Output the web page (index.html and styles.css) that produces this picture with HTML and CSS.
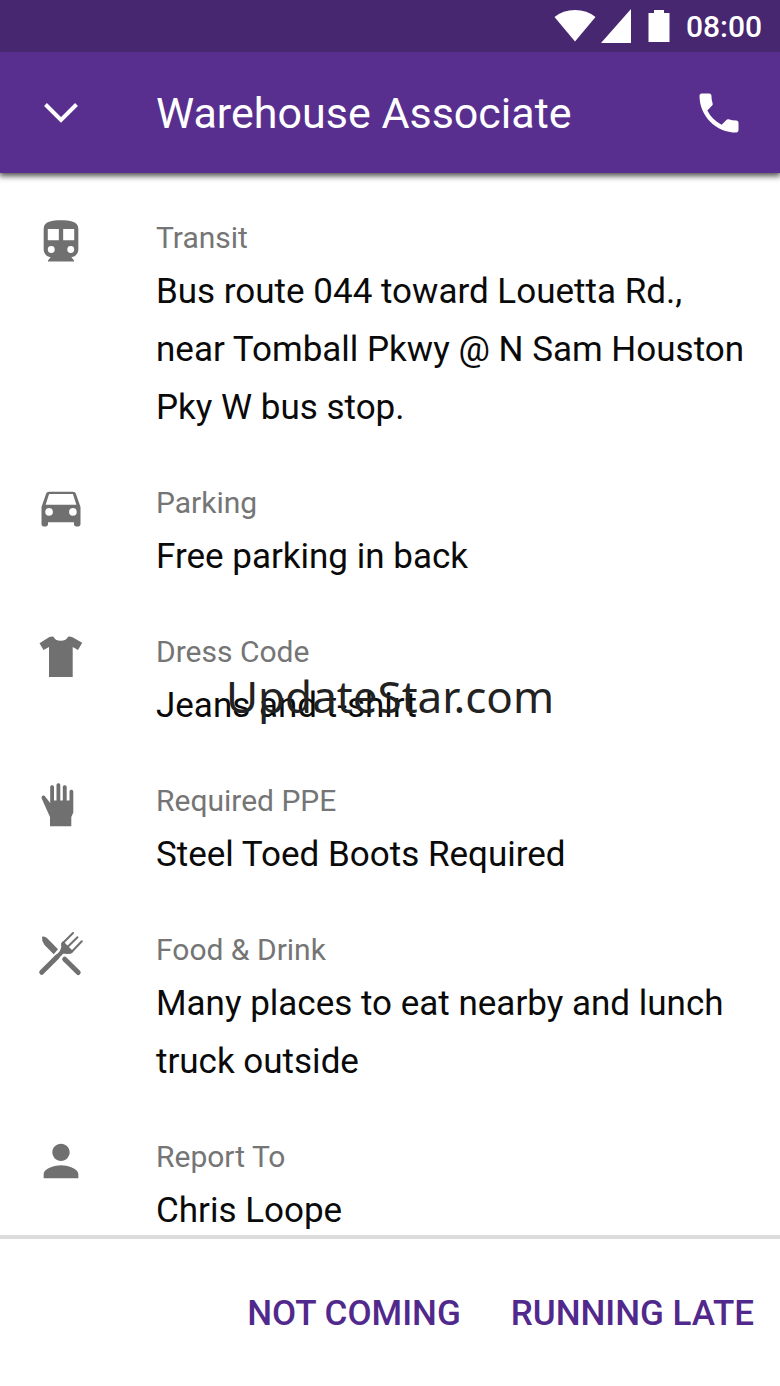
FILE: index.html
```html
<!DOCTYPE html>
<html lang="en">
<head>
<meta charset="utf-8">
<meta name="viewport" content="width=device-width, initial-scale=1">
<title>Warehouse Associate</title>
<link rel="stylesheet" href="styles.css">
</head>
<body>
<div class="status">
  <svg class="status-wifi" viewBox="0 0 42 34" aria-hidden="true"><path d="M0.5 8Q9 1 21 1T41.500 8L21 32.500Z"/></svg>
  <svg class="status-signal" viewBox="0 0 30 34" aria-hidden="true"><path d="M30 0V34H0Z"/></svg>
  <svg class="status-battery" viewBox="0 0 22 34" aria-hidden="true"><path d="M6 1H16V4H21.500V33H.5V4H6Z"/></svg>
  <time class="clock">08:00</time>
</div>
<header class="appbar">
  <button class="icon-button" type="button" aria-label="Collapse"><svg class="icon" viewBox="0 0 52 52"><path class="chevron" d="M10.500 17.500 26 33 41.500 17.500"/></svg></button>
  <h1 class="title">Warehouse Associate</h1>
  <button class="icon-button" type="button" aria-label="Call"><svg class="icon" viewBox="0 0 24 24"><path d="M6.620 10.790c1.440 2.830 3.760 5.140 6.590 6.590l2.200-2.200c.27-.27.67-.36 1.020-.24 1.120.37 2.330.57 3.570.57.55 0 1 .45 1 1V20c0 .55-.45 1-1 1C10.610 21 3 13.390 3 4c0-.55.45-1 1-1h3.500c.55 0 1 .45 1 1 0 1.250.2 2.450.57 3.570.11.35.03.74-.25 1.020l-2.200 2.200z"/></svg></button>
</header>
<main class="details">
  <section class="row">
    <svg class="icon" viewBox="0 0 24 24" aria-hidden="true"><path fill-rule="evenodd" d="M12 2C8 2 4 2.500 4 6v9.500C4 17.300 5.400 18.800 7.200 19L6 20.500v.5h12v-.5L16.800 19c1.800-.2 3.200-1.700 3.200-3.500V6c0-3.500-4-4-8-4zM5.900 6H11v5.200H5.900zM13 6h5.100v5.200H13zM7.500 13.900a1.600 1.600 0 1 1 0 3.200 1.600 1.600 0 0 1 0-3.200zM16.500 13.900a1.600 1.600 0 1 1 0 3.200 1.600 1.600 0 0 1 0-3.200z"/></svg>
    <div class="text"><h2 class="label">Transit</h2><p class="value">Bus route 044 toward Louetta Rd., near Tomball Pkwy @ N Sam Houston Pky W bus stop.</p></div>
  </section>
  <section class="row">
    <svg class="icon" viewBox="0 0 24 24" aria-hidden="true"><path fill-rule="evenodd" d="M18.920 6.010C18.720 5.420 18.160 5 17.500 5h-11c-.66 0-1.210.42-1.420 1.010L3 12v8c0 .55.45 1 1 1h1c.55 0 1-.45 1-1v-1h12v1c0 .55.45 1 1 1h1c.55 0 1-.45 1-1v-8zM6.500 16a1.500 1.500 0 1 1 0-3.500 1.600 1.600 0 0 1 0 3.500zm11 0a1.500 1.500 0 1 1 0-3.500 1.600 1.600 0 0 1 0 3.500zM4.900 11 6.500 6h11l1.600 5z"/></svg>
    <div class="text"><h2 class="label">Parking</h2><p class="value">Free parking in back</p></div>
  </section>
  <section class="row">
    <svg class="icon" viewBox="0 0 52 52" aria-hidden="true"><path d="M4.500 13.300 14 7.200Q15 6.500 18.300 6.500 20 10.700 25.700 10.700T33.300 6.500Q36.500 6.500 37.500 7.200L47.200 12.800 43 20 37.700 17V47H14V17L8.500 20Z"/></svg>
    <div class="text"><h2 class="label">Dress Code</h2><p class="value">Jeans and t-shirt</p></div>
  </section>
  <section class="row">
    <svg class="icon" viewBox="0 0 52 52" aria-hidden="true"><path d="M15 47.300V38L6.700 19.500C6 16.500 9 15.500 10.500 18L15.200 24V8C15.200 5.500 19 5.500 19 8V21.500H21.500V6C21.500 3.700 25.300 3.700 25.300 6V21.500H27.800V8C27.800 5.500 31.700 5.500 31.700 8V21.500H34.500V12.500C34.500 10 38.300 10 38.300 12.500V33.500L36.300 38V47.300Z"/></svg>
    <div class="text"><h2 class="label">Required PPE</h2><p class="value">Steel Toed Boots Required</p></div>
  </section>
  <section class="row">
    <svg class="icon" viewBox="0 0 52 52" aria-hidden="true"><path d="M7 8.700Q9.500 7.700 12 10L23 21.300 18.700 26.300 9.500 17Q6.500 13 7 8.700ZM26.300 19 26 15.500 28 13 32.500 17.500 38.500 23.500 36 25.800 32 26 28 25.500 24.500 24.500Z"/><path class="handle" d="M29.700 31.200 43.200 44.500M6.700 44.300 22 29"/><path class="neck" d="M21.500 29.500 31 20"/><path class="tine" d="M38 5 28 15M42.500 9.200 32.500 19M46.800 13.200 37 23.500"/></svg>
    <div class="text"><h2 class="label">Food &amp; Drink</h2><p class="value">Many places to eat nearby and lunch truck outside</p></div>
  </section>
  <section class="row">
    <svg class="icon" viewBox="0 0 24 24" aria-hidden="true"><path d="M12 12c2.210 0 4-1.790 4-4s-1.790-4-4-4-4 1.790-4 4 1.790 4 4 4zm0 2c-2.670 0-8 1.340-8 4v2h16v-2c0-2.660-5.330-4-8-4z"/></svg>
    <div class="text"><h2 class="label">Report To</h2><p class="value">Chris Loope</p></div>
  </section>
</main>
<footer class="actions">
  <button class="action" type="button">NOT COMING</button>
  <button class="action" type="button">RUNNING LATE</button>
</footer>
<div class="watermark">UpdateStar.com</div>
</body>
</html>
```
FILE: styles.css
```css
* {
  box-sizing: border-box;
}

body {
  margin: 0;
  height: 100vh;
  display: flex;
  flex-direction: column;
  background: #fff;
  color: #0a0a0a;
  font-family: Roboto, sans-serif;
}

svg {
  display: block;
  flex: none;
  fill: currentColor;
}

.status {
  flex: none;
  height: 52px;
  padding: 0 18px;
  display: flex;
  align-items: center;
  justify-content: flex-end;
  background: #472770;
  color: #fff;
}

.status-wifi {
  width: 42px;
  height: 34px;
  margin-right: 5px;
}

.status-signal {
  width: 30px;
  height: 34px;
  margin-right: 17px;
}

.status-battery {
  width: 22px;
  height: 34px;
  margin-right: 16px;
}

.clock {
  font-size: 30px;
  font-weight: 500;
}

.appbar {
  flex: none;
  z-index: 1;
  height: 121px;
  padding: 0 35px;
  display: flex;
  align-items: center;
  background: #582f8f;
  color: #fff;
  box-shadow: 0 2px 6px 1px rgba(0, 0, 0, 0.7);
  clip-path: inset(0 0 -12px);
}

.icon-button {
  padding: 0;
  border: 0;
  background: none;
  color: inherit;
}

.icon {
  width: 52px;
  height: 52px;
}

.chevron,
.handle,
.neck,
.tine {
  fill: none;
  stroke: currentColor;
}

.chevron {
  stroke-width: 4;
}

.handle {
  stroke-width: 5;
  stroke-linecap: round;
}

.neck {
  stroke-width: 4;
}

.tine {
  stroke-width: 2;
  stroke-linecap: round;
}

.title {
  flex: 1;
  margin: 0 0 0 69px;
  font-size: 43px;
  font-weight: 400;
}

.details {
  flex: 1;
  min-height: 0;
  overflow-y: auto;
  scrollbar-width: none;
  padding: 40px 30px 0 35px;
}

.row {
  display: flex;
  gap: 69px;
  margin-bottom: 41px;
}

.row .icon {
  margin-top: 3px;
  color: #707070;
}

.text {
  flex: 1;
}

.label {
  margin: 0;
  font-size: 30px;
  font-weight: 400;
  line-height: 50px;
  color: #757575;
}

.value {
  margin: 0;
  font-size: 35px;
  line-height: 58px;
}

.actions {
  flex: none;
  height: 151px;
  padding: 2px 26px 0;
  display: flex;
  align-items: center;
  justify-content: flex-end;
  gap: 50px;
  border-top: 4px solid #dcdcdc;
}

.action {
  padding: 0;
  border: 0;
  background: none;
  color: #51298c;
  font: 500 35px/40px Roboto, sans-serif;
}

.watermark {
  position: absolute;
  top: 50%;
  left: 50%;
  transform: translate(-50%, -50%);
  padding-top: 6px;
  color: #222;
  font: 44px/60px "Noto Sans", sans-serif;
  pointer-events: none;
}
```
